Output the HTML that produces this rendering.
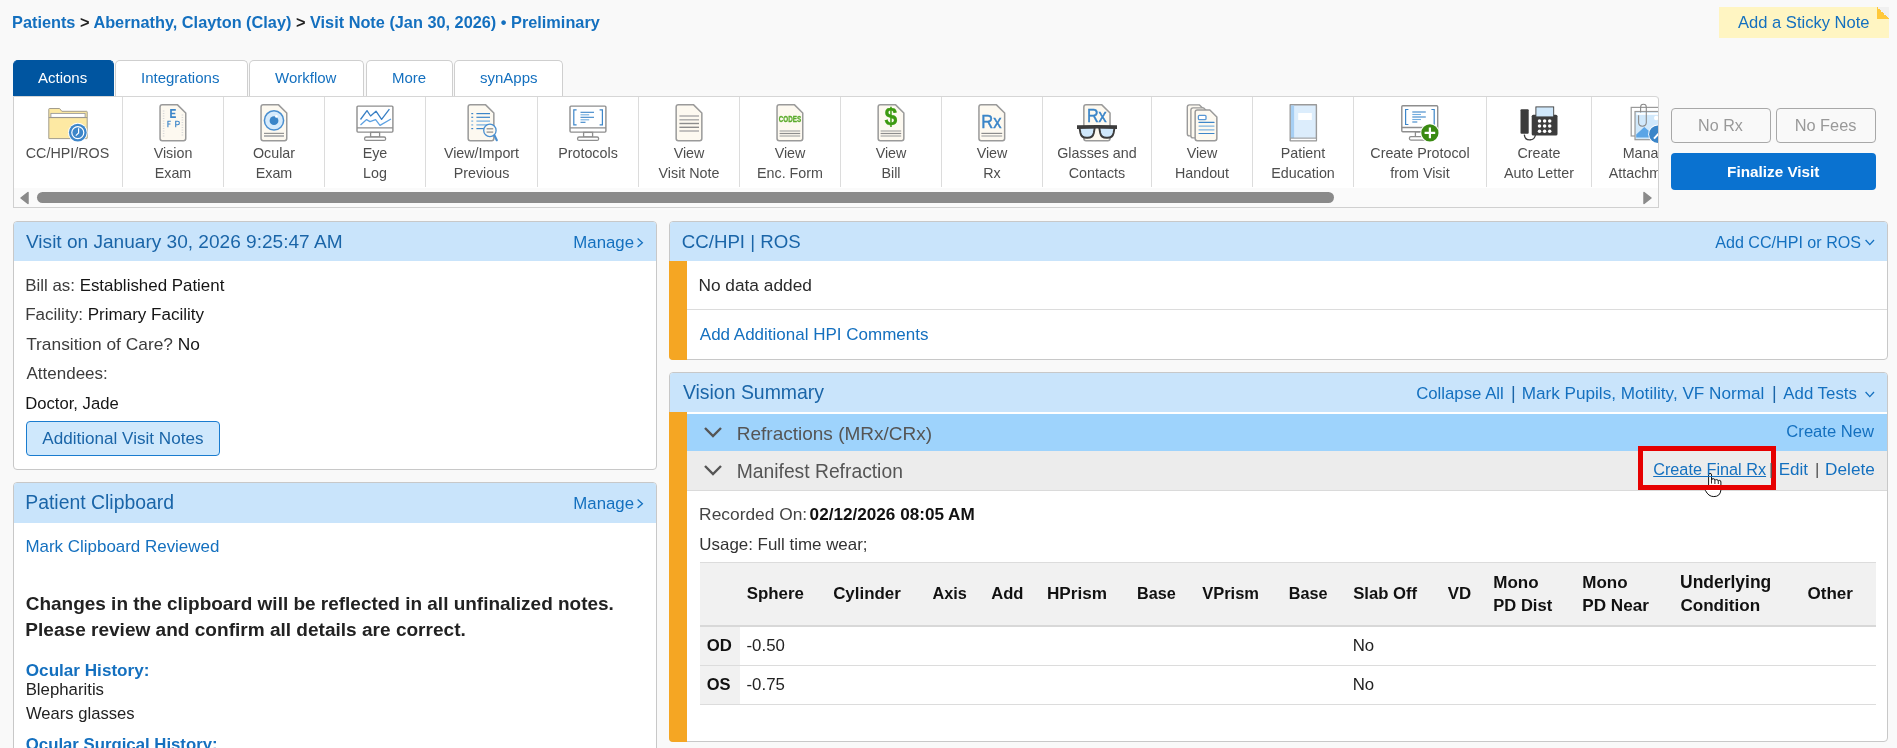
<!DOCTYPE html>
<html><head><meta charset="utf-8"><style>
html,body{margin:0;padding:0}
body{width:1897px;height:748px;overflow:hidden;position:relative;background:#f9f9f9;font-family:"Liberation Sans",sans-serif}
.t{position:absolute;white-space:nowrap;line-height:1}
.lk{color:#1470bf}
.tl{position:absolute;width:160px;text-align:center;font-size:14.3px;line-height:1;color:#4e4e4e;white-space:nowrap}
.a{position:absolute;box-sizing:border-box}
.sticky{left:1719px;top:7px;width:170px;height:31px;background:#fff5c2}
.fold{left:1877px;top:7px;width:12px;height:12px;background:linear-gradient(to bottom left,#f0f0f0 50%,#ffc83a 50%)}
.tab{top:60px;height:36px;background:#fff;border:1px solid #cfcfcf;border-bottom:none;border-radius:5px 5px 0 0}
.tab.act{background:#0055a0;border-color:#0055a0}
.tb{left:13px;top:96px;width:1646px;height:112px;background:#fff;border:1px solid #d0d0d0;border-top-color:#d6d6d6;border-radius:0 4px 0 0}
.sep{top:97px;width:1px;height:90px;background:#dcdcdc}
.sbar{left:14px;top:188px;width:1644px;height:19px;background:#fafafa}
.thumb{left:37px;top:192px;width:1297px;height:11px;background:#8a8a8a;border-radius:6px}
.btn{top:108px;height:35px;border:1px solid #a8a8a8;border-radius:4px;background:#f9f9f9}
.fin{left:1671px;top:153px;width:205px;height:37px;background:#0a72d0;border-radius:4px}
.panel{background:#fff;border:1px solid #c8c8c8;border-radius:4px;overflow:hidden}
.ph{position:absolute;left:0;top:0;right:0;height:39px;background:#c9e4fb}
.orange{background:#f5a623}

</style></head><body>
<!-- sticky note -->
<div class="a sticky"></div>
<div class="a fold"></div>
<!-- tabs -->
<div class="a tab act" style="left:13px;width:101px"></div>
<div class="a tab" style="left:115px;width:133px"></div>
<div class="a tab" style="left:249px;width:115px"></div>
<div class="a tab" style="left:366px;width:87px"></div>
<div class="a tab" style="left:454px;width:109px"></div>
<!-- toolbar -->
<div class="a tb"></div>
<div class="a sep" style="left:122px"></div>
<div class="a sep" style="left:223px"></div>
<div class="a sep" style="left:324px"></div>
<div class="a sep" style="left:425px"></div>
<div class="a sep" style="left:537px"></div>
<div class="a sep" style="left:638px"></div>
<div class="a sep" style="left:739px"></div>
<div class="a sep" style="left:840px"></div>
<div class="a sep" style="left:941px"></div>
<div class="a sep" style="left:1042px"></div>
<div class="a sep" style="left:1151px"></div>
<div class="a sep" style="left:1252px"></div>
<div class="a sep" style="left:1353px"></div>
<div class="a sep" style="left:1486px"></div>
<div class="a sep" style="left:1591px"></div>
<div class="a sbar"></div>
<div class="a thumb"></div>
<svg class="a" style="left:19px;top:191px" width="11" height="14"><path d="M2 7 L9 1.5 L9 12.5 Z" fill="#8a8a8a" stroke="#8a8a8a" stroke-width="1.5" stroke-linejoin="round"/></svg>
<svg class="a" style="left:1642px;top:191px" width="11" height="14"><path d="M9 7 L2 1.5 L2 12.5 Z" fill="#8a8a8a" stroke="#8a8a8a" stroke-width="1.5" stroke-linejoin="round"/></svg>
<!-- right buttons -->
<div class="a btn" style="left:1671px;width:100px"></div>
<div class="a btn" style="left:1776px;width:100px"></div>
<div class="a fin"></div>

<!-- visit panel -->
<div class="a panel" style="left:13px;top:221px;width:644px;height:249px"><div class="ph"></div></div>
<svg class="a" style="left:635px;top:236px" width="10" height="14"><path d="M2.6 2.6 L7.4 6.8 L2.6 11" fill="none" stroke="#1470bf" stroke-width="1.3"/></svg>
<div class="a" style="left:26px;top:421px;width:194px;height:35px;background:#cfe8fc;border:1px solid #1a7ccf;border-radius:4px"></div>

<!-- clipboard panel -->
<div class="a panel" style="left:13px;top:482px;width:644px;height:300px"><div class="ph" style="height:40px"></div></div>
<svg class="a" style="left:635px;top:497px" width="10" height="14"><path d="M2.6 2.6 L7.4 6.8 L2.6 11" fill="none" stroke="#1470bf" stroke-width="1.3"/></svg>

<!-- CC/HPI panel -->
<div class="a panel" style="left:669px;top:221px;width:1219px;height:139px"><div class="ph"></div>
  <div class="a" style="left:17px;top:87px;right:0;height:1px;background:#dcdcdc"></div>
</div>
<svg class="a" style="left:1864px;top:237px" width="12" height="10"><path d="M1.6 3 L5.8 7.6 L10 3" fill="none" stroke="#1470bf" stroke-width="1.3"/></svg>

<!-- Vision summary panel -->
<div class="a panel" style="left:669px;top:372px;width:1219px;height:370px"><div class="ph"></div>
  <div class="a" style="left:17px;top:39px;right:0;height:2px;background:#fff"></div>
  <div class="a" style="left:17px;top:41px;right:0;height:37px;background:#9ed3fc"></div>
  <div class="a" style="left:17px;top:78px;right:0;height:40px;background:#ececec;border-bottom:1px solid #dadada"></div>
  <!-- table -->
  <div class="a" style="left:30px;top:189px;width:1176px;height:65px;background:#f1f1f1;border-top:1px solid #dcdcdc;border-bottom:2px solid #d8d8d8"></div>
  <div class="a" style="left:30px;top:254px;width:40px;height:78px;background:#f1f1f1"></div>
  <div class="a" style="left:30px;top:292px;width:1176px;height:1px;background:#dcdcdc"></div>
  <div class="a" style="left:30px;top:331px;width:1176px;height:1px;background:#dcdcdc"></div>
</div>
<svg class="a" style="left:1864px;top:389px" width="12" height="10"><path d="M1.6 3 L5.8 7.6 L10 3" fill="none" stroke="#1470bf" stroke-width="1.3"/></svg>
<svg class="a" style="left:703px;top:426px" width="20" height="13"><path d="M2 2 L10 10 L18 2" fill="none" stroke="#555" stroke-width="2.4"/></svg>
<svg class="a" style="left:703px;top:464px" width="20" height="13"><path d="M2 2 L10 10 L18 2" fill="none" stroke="#555" stroke-width="2.4"/></svg>
<div class="a orange" style="left:669px;top:261px;width:18px;height:99px;border-radius:0 0 0 4px"></div>
<div class="a orange" style="left:669px;top:412px;width:18px;height:330px;border-radius:0 0 0 4px"></div>
<!-- cursor -->
<svg class="a" style="left:0;top:0" width="1897" height="748" viewBox="0 0 1897 748"><path d="M1708.6 486.5 L1708.6 475 Q1708.6 473.3 1710.05 473.3 Q1711.5 473.3 1711.5 475 L1711.5 480.2 Q1711.6 478.7 1713.2 478.7 Q1714.9 478.7 1714.9 480.4 Q1715.1 479.6 1716.6 479.6 Q1718.3 479.6 1718.3 481.2 Q1718.5 480.4 1719.6 480.4 Q1720.9 480.4 1720.9 482 L1720.9 490 Q1720.3 496.6 1713.8 496.6 Q1708.4 496.6 1705.4 490.4 Z" fill="#fff" stroke="#111" stroke-width="1" stroke-linejoin="round"/><path d="M1711.5 480.2 L1711.5 483.6 M1714.9 480.4 L1714.9 484 M1718.3 481.2 L1718.3 484" stroke="#111" stroke-width="0.9"/></svg>
<!-- red highlight box -->
<div class="a" style="left:1638px;top:446px;width:138px;height:44px;border:5px solid #e60000"></div>

<div class="a" style="left:0;top:0;width:1658px;height:188px;overflow:hidden;will-change:transform"><svg class="a" style="left:0;top:0" width="1658" height="188" viewBox="0 0 1658 188">
<path d="M48.8 138.6 L48.8 109.2 Q48.8 108.5 49.5 108.5 L59.6 108.5 L61.8 111.3 L86.6 111.3 Q87.2 111.3 87.2 112 L87.2 138 Q87.2 138.6 86.6 138.6 Z" fill="#fde9a3" stroke="#a39d8c" stroke-width="1"/>
<rect x="50.9" y="113.4" width="34.2" height="4" fill="#fff" stroke="#9a9a9a" stroke-width="0.9"/>
<line x1="48.8" y1="117.6" x2="87.2" y2="117.6" stroke="#9a9690" stroke-width="1"/>
<circle cx="77.8" cy="132.6" r="9.8" fill="#fff"/>
<circle cx="77.8" cy="132.6" r="8.9" fill="#3d86c9"/>
<circle cx="77.8" cy="132.6" r="6" fill="none" stroke="#fff" stroke-width="1.2"/>
<path d="M78.6 128.2 L78.6 133 L75.8 135.6" fill="none" stroke="#fff" stroke-width="1.2"/>
<path d="M162.25 104.85 L177.55 104.85 L185.75 113.05 L185.75 138.55 Q185.75 140.75 183.55 140.75 L162.25 140.75 Q160.05 140.75 160.05 138.55 L160.05 107.05 Q160.05 104.85 162.25 104.85 Z" fill="#fdf9f0" stroke="#9a9a9a" stroke-width="1.5" stroke-linejoin="round"/><rect x="162.8" y="110.5" width="1.6" height="1" fill="#d8d8d8"/><rect x="162.8" y="113.0" width="1.6" height="1" fill="#d8d8d8"/><rect x="162.8" y="115.5" width="1.6" height="1" fill="#d8d8d8"/><rect x="162.8" y="118.0" width="1.6" height="1" fill="#d8d8d8"/><rect x="162.8" y="120.5" width="1.6" height="1" fill="#d8d8d8"/><rect x="162.8" y="123.0" width="1.6" height="1" fill="#d8d8d8"/><rect x="162.8" y="125.5" width="1.6" height="1" fill="#d8d8d8"/><rect x="162.8" y="128.0" width="1.6" height="1" fill="#d8d8d8"/><rect x="162.8" y="130.5" width="1.6" height="1" fill="#d8d8d8"/><rect x="162.8" y="133.0" width="1.6" height="1" fill="#d8d8d8"/><rect x="162.8" y="135.5" width="1.6" height="1" fill="#d8d8d8"/><rect x="181.6" y="114.5" width="1.6" height="1" fill="#d8d8d8"/><rect x="181.6" y="117.0" width="1.6" height="1" fill="#d8d8d8"/><rect x="181.6" y="119.5" width="1.6" height="1" fill="#d8d8d8"/><rect x="181.6" y="122.0" width="1.6" height="1" fill="#d8d8d8"/><rect x="181.6" y="124.5" width="1.6" height="1" fill="#d8d8d8"/><rect x="181.6" y="127.0" width="1.6" height="1" fill="#d8d8d8"/><rect x="181.6" y="129.5" width="1.6" height="1" fill="#d8d8d8"/><rect x="181.6" y="132.0" width="1.6" height="1" fill="#d8d8d8"/><rect x="181.6" y="134.5" width="1.6" height="1" fill="#d8d8d8"/><path d="M175.8 109.8 L171 109.8 L171 117.2 L175.9 117.2 M171 113.5 L175.3 113.5" fill="none" stroke="#3d86c9" stroke-width="1.7"/><path d="M170.8 121.3 L167.9 121.3 L167.9 127.2 M167.9 124 L170.4 124" fill="none" stroke="#3d86c9" stroke-width="1.1"/><path d="M175.7 127.2 L175.7 121.3 L177.6 121.3 Q179.4 121.3 179.4 123 Q179.4 124.7 177.6 124.7 L175.7 124.7" fill="none" stroke="#3d86c9" stroke-width="1.1"/><path d="M263.25 104.85 L278.55 104.85 L286.75 113.05 L286.75 138.55 Q286.75 140.75 284.55 140.75 L263.25 140.75 Q261.05 140.75 261.05 138.55 L261.05 107.05 Q261.05 104.85 263.25 104.85 Z" fill="#fdf9f0" stroke="#9a9a9a" stroke-width="1.5" stroke-linejoin="round"/><circle cx="274" cy="120.4" r="9.6" fill="#d6ebfc" stroke="#4a8fd0" stroke-width="1.5"/><circle cx="274" cy="120.7" r="4.4" fill="#3a85c8"/><circle cx="276.4" cy="116.4" r="1.3" fill="#fff"/><rect x="264" y="132.8" width="20" height="1.1" fill="#8a8a8a"/><rect x="264" y="135" width="20" height="2" fill="#b4b4b4"/><rect x="357.0" y="106.10000000000001" width="35.9" height="26" rx="1" fill="#fff" stroke="#8e8e8e" stroke-width="1.4"/><line x1="357.0" y1="127.80000000000001" x2="392.90000000000003" y2="127.80000000000001" stroke="#8e8e8e" stroke-width="1.3"/><rect x="370.6" y="132.4" width="9" height="4.6" fill="#fff" stroke="#8e8e8e" stroke-width="1.3"/><rect x="364.6" y="137.0" width="21" height="3.4" rx="1.5" fill="#fff" stroke="#8e8e8e" stroke-width="1.3"/><polyline points="360.5,119.5 367,110.6 370.6,116 376,111.2 381.6,119.4 389.4,109.2" fill="none" stroke="#3a80c5" stroke-width="1.3" stroke-linejoin="round"/><polyline points="360.5,125 366.6,119.6 370,121.6 375.6,119.6 380,125.4 391,119" fill="none" stroke="#5ea2e2" stroke-width="1.3" stroke-linejoin="round"/><path d="M470.35 104.85 L485.65 104.85 L493.85 113.05 L493.85 138.55 Q493.85 140.75 491.65 140.75 L470.35 140.75 Q468.15 140.75 468.15 138.55 L468.15 107.05 Q468.15 104.85 470.35 104.85 Z" fill="#fdf9f0" stroke="#9a9a9a" stroke-width="1.5" stroke-linejoin="round"/><rect x="471.3" y="113.0" width="1.9" height="1.2" fill="#3d86c9"/><rect x="476.4" y="113.0" width="13.6" height="1.2" fill="#3d86c9"/><rect x="471.3" y="116.7" width="1.9" height="1.2" fill="#3d86c9"/><rect x="476.4" y="116.7" width="13.6" height="1.2" fill="#3d86c9"/><rect x="471.3" y="120.5" width="1.9" height="1.2" fill="#73aee0"/><rect x="476.4" y="120.5" width="13.6" height="1.2" fill="#73aee0"/><rect x="471.3" y="124.30000000000001" width="1.9" height="1.2" fill="#73aee0"/><rect x="476.4" y="124.30000000000001" width="13.6" height="1.2" fill="#73aee0"/><rect x="471.3" y="128.0" width="1.9" height="1.2" fill="#3d86c9"/><rect x="476.4" y="128.0" width="13.6" height="1.2" fill="#3d86c9"/><line x1="494" y1="134.6" x2="496.8" y2="140.2" stroke="#4a8fd0" stroke-width="2.2" stroke-linecap="round"/><circle cx="489.9" cy="130.4" r="6.2" fill="#fdf9f0" stroke="#4a8fd0" stroke-width="1.3"/><line x1="486.6" y1="128.8" x2="493.2" y2="128.8" stroke="#8a8a8a" stroke-width="1.2"/><line x1="486.6" y1="132.1" x2="493.2" y2="132.1" stroke="#8a8a8a" stroke-width="1.2"/><rect x="570.0" y="106.10000000000001" width="35.9" height="26" rx="1" fill="#fff" stroke="#8e8e8e" stroke-width="1.4"/><line x1="570.0" y1="127.80000000000001" x2="605.8999999999999" y2="127.80000000000001" stroke="#8e8e8e" stroke-width="1.3"/><rect x="583.5999999999999" y="132.4" width="9" height="4.6" fill="#fff" stroke="#8e8e8e" stroke-width="1.3"/><rect x="577.5999999999999" y="137.0" width="21" height="3.4" rx="1.5" fill="#fff" stroke="#8e8e8e" stroke-width="1.3"/><path d="M576.6 109.8 L573.8 109.8 L573.8 124.8 L576.6 124.8 M599.6 109.8 L602.4 109.8 L602.4 124.8 L599.6 124.8" fill="none" stroke="#3d86c9" stroke-width="1.2"/><rect x="580.5" y="111.75" width="13.5" height="1.1" fill="#3d86c9"/><rect x="580.5" y="114.25" width="8.700000000000045" height="1.1" fill="#73aee0"/><rect x="580.5" y="116.75" width="13.5" height="1.1" fill="#3d86c9"/><rect x="580.5" y="119.25" width="8.700000000000045" height="1.1" fill="#73aee0"/><rect x="580.5" y="121.75" width="5.0" height="1.1" fill="#3d86c9"/><path d="M678.35 104.85 L693.65 104.85 L701.85 113.05 L701.85 138.55 Q701.85 140.75 699.65 140.75 L678.35 140.75 Q676.15 140.75 676.15 138.55 L676.15 107.05 Q676.15 104.85 678.35 104.85 Z" fill="#fdf9f0" stroke="#9a9a9a" stroke-width="1.5" stroke-linejoin="round"/><rect x="679.4" y="115.3" width="19.6" height="1.4" fill="#a8a8a8"/><rect x="679.4" y="119.1" width="19.6" height="1.4" fill="#a8a8a8"/><rect x="679.4" y="122.8" width="19.6" height="1.4" fill="#8c8c8c"/><rect x="679.4" y="126.6" width="19.6" height="1.4" fill="#8c8c8c"/><rect x="679.4" y="130.3" width="19.6" height="1.4" fill="#a8a8a8"/><path d="M779.25 104.85 L794.55 104.85 L802.75 113.05 L802.75 138.55 Q802.75 140.75 800.55 140.75 L779.25 140.75 Q777.05 140.75 777.05 138.55 L777.05 107.05 Q777.05 104.85 779.25 104.85 Z" fill="#fdf9f0" stroke="#9a9a9a" stroke-width="1.5" stroke-linejoin="round"/><text x="778.8" y="121.7" font-family="Liberation Sans" font-weight="700" font-size="9" fill="#5aab2a" stroke="#5aab2a" stroke-width="0.35" textLength="22.4" lengthAdjust="spacingAndGlyphs">CODES</text><rect x="779.6" y="130.4" width="20.6" height="1.2" fill="#a8a8a8"/><rect x="779.6" y="132.9" width="20.6" height="1.2" fill="#8c8c8c"/><rect x="779.6" y="135.4" width="20.6" height="1.2" fill="#a8a8a8"/><path d="M880.35 104.85 L895.65 104.85 L903.85 113.05 L903.85 138.55 Q903.85 140.75 901.65 140.75 L880.35 140.75 Q878.15 140.75 878.15 138.55 L878.15 107.05 Q878.15 104.85 880.35 104.85 Z" fill="#fdf9f0" stroke="#9a9a9a" stroke-width="1.5" stroke-linejoin="round"/><text x="890.8" y="124.6" text-anchor="middle" font-family="Liberation Sans" font-weight="700" font-size="23" fill="#3d9a10" stroke="#3d9a10" stroke-width="0.3">$</text><rect x="880.6" y="130.4" width="20.6" height="1.2" fill="#a8a8a8"/><rect x="880.6" y="132.9" width="20.6" height="1.2" fill="#8c8c8c"/><rect x="880.6" y="135.4" width="20.6" height="1.2" fill="#a8a8a8"/><path d="M981.15 104.85 L996.45 104.85 L1004.65 113.05 L1004.65 138.55 Q1004.65 140.75 1002.45 140.75 L981.15 140.75 Q978.95 140.75 978.95 138.55 L978.95 107.05 Q978.95 104.85 981.15 104.85 Z" fill="#fdf9f0" stroke="#9a9a9a" stroke-width="1.5" stroke-linejoin="round"/><text x="981.3" y="128" font-family="Liberation Sans" font-weight="400" font-size="19" fill="#3a85c8" stroke="#3a85c8" stroke-width="0.45" textLength="20.2" lengthAdjust="spacingAndGlyphs">Rx</text><rect x="981.4" y="132.8" width="20.8" height="1.2" fill="#8c8c8c"/><rect x="981.4" y="135.4" width="20.8" height="1.2" fill="#a8a8a8"/><path d="M1086.05 104.85 L1101.85 104.85 L1110.05 113.05 L1110.05 138.55 Q1110.05 140.75 1107.85 140.75 L1086.05 140.75 Q1083.85 140.75 1083.85 138.55 L1083.85 107.05 Q1083.85 104.85 1086.05 104.85 Z" fill="#fdf9f0" stroke="#9a9a9a" stroke-width="1.5" stroke-linejoin="round"/><text x="1086.9" y="121.5" font-family="Liberation Sans" font-weight="400" font-size="19" fill="#3a85c8" stroke="#3a85c8" stroke-width="0.45" textLength="19.8" lengthAdjust="spacingAndGlyphs">Rx</text><path d="M1079.4 127.4 L1094.8 127.4 L1093.8 133 Q1092.8 137.8 1087.6 137.8 L1086.6 137.8 Q1081.4 137.8 1080.4 133 Z" fill="#d0e8fb" stroke="#3c3c3c" stroke-width="1.9" stroke-linejoin="round"/><path d="M1099.2 127.4 L1114.6 127.4 L1113.6 133 Q1112.6 137.8 1107.4 137.8 L1106.4 137.8 Q1101.2 137.8 1100.2 133 Z" fill="#d0e8fb" stroke="#3c3c3c" stroke-width="1.9" stroke-linejoin="round"/><path d="M1077 125.3 Q1097 124.5 1117 125.3 L1117 128.9 Q1097 128.1 1077 128.9 Z" fill="#3c3c3c"/><path d="M1189.50 104.90 L1199.50 104.90 L1202.50 107.90 L1202.50 133.70 Q1202.50 135.90 1200.30 135.90 L1189.50 135.90 Q1187.30 135.90 1187.30 133.70 L1187.30 107.10 Q1187.30 104.90 1189.50 104.90 Z" fill="#fdf9f0" stroke="#9a9a9a" stroke-width="1.4" stroke-linejoin="round"/><path d="M1193.10 107.90 L1203.70 107.90 L1206.70 110.90 L1206.70 135.70 Q1206.70 137.90 1204.50 137.90 L1193.10 137.90 Q1190.90 137.90 1190.90 135.70 L1190.90 110.10 Q1190.90 107.90 1193.10 107.90 Z" fill="#fdf9f0" stroke="#9a9a9a" stroke-width="1.4" stroke-linejoin="round"/><path d="M1197.35 110.05 L1209.85 110.05 L1216.85 117.05 L1216.85 138.55 Q1216.85 140.75 1214.65 140.75 L1197.35 140.75 Q1195.15 140.75 1195.15 138.55 L1195.15 112.25 Q1195.15 110.05 1197.35 110.05 Z" fill="#fdf9f0" stroke="#9a9a9a" stroke-width="1.5" stroke-linejoin="round"/><rect x="1198.4" y="115.3" width="7.6" height="4.4" rx="1" fill="#fff" stroke="#5a97d3" stroke-width="1.3"/><rect x="1198.4" y="121.80000000000001" width="16.2" height="1.2" rx="0.6" fill="#3d86c9"/><rect x="1198.4" y="125.5" width="16.2" height="1.2" rx="0.6" fill="#80b4e0"/><rect x="1198.4" y="129.20000000000002" width="16.2" height="1.2" rx="0.6" fill="#80b4e0"/><rect x="1198.4" y="132.9" width="16.2" height="1.2" rx="0.6" fill="#3d86c9"/>
<path d="M1290.2 104.8 L1316.4 104.8 L1316.4 140.8 L1290.2 140.8 Z" fill="#dcedfc" stroke="#9a9a9a" stroke-width="1.4" stroke-linejoin="round"/>
<rect x="1290.9" y="105.5" width="3.2" height="32.6" fill="#a6cff4"/>
<line x1="1290.2" y1="138.2" x2="1316.4" y2="138.2" stroke="#9a9a9a" stroke-width="1.2"/>
<rect x="1291" y="138.8" width="24.8" height="1.4" fill="#fff"/>
<rect x="1298.2" y="113" width="13.6" height="7" fill="#fff"/>
<rect x="1401.8" y="105.8" width="35.9" height="26" rx="1" fill="#fff" stroke="#8e8e8e" stroke-width="1.4"/><line x1="1401.8" y1="127.5" x2="1437.6999999999998" y2="127.5" stroke="#8e8e8e" stroke-width="1.3"/><rect x="1415.3999999999999" y="132.1" width="9" height="4.6" fill="#fff" stroke="#8e8e8e" stroke-width="1.3"/><rect x="1409.3999999999999" y="136.7" width="21" height="3.4" rx="1.5" fill="#fff" stroke="#8e8e8e" stroke-width="1.3"/><path d="M1408.4 109.5 L1405.6 109.5 L1405.6 124.5 L1408.4 124.5 M1431.4 109.5 L1434.2 109.5 L1434.2 124.5 L1431.4 124.5" fill="none" stroke="#3d86c9" stroke-width="1.2"/><rect x="1412.3" y="111.45" width="13.5" height="1.1" fill="#3d86c9"/><rect x="1412.3" y="113.95" width="8.700000000000045" height="1.1" fill="#73aee0"/><rect x="1412.3" y="116.45" width="13.5" height="1.1" fill="#3d86c9"/><rect x="1412.3" y="118.95" width="8.700000000000045" height="1.1" fill="#73aee0"/><rect x="1412.3" y="121.45" width="5.0" height="1.1" fill="#3d86c9"/><circle cx="1429.9" cy="132.9" r="9.6" fill="#fff"/><circle cx="1429.9" cy="132.9" r="8.6" fill="#3a8a12"/><path d="M1429.9 127.6 L1429.9 138.2 M1424.6 132.9 L1435.2 132.9" stroke="#fff" stroke-width="2.2"/>
<rect x="1520.5" y="109.3" width="8.2" height="24.4" rx="1" fill="#3c3c3c"/>
<path d="M1524.3 134.6 Q1524.8 139.9 1529.6 139.9 Q1534.6 139.9 1535.4 135" fill="none" stroke="#3c3c3c" stroke-width="1.3"/>
<rect x="1531.7" y="114.7" width="25.8" height="20.8" rx="1.6" fill="#3c3c3c"/>
<rect x="1535.9" y="106.9" width="17.8" height="10" fill="#d0e8fb" stroke="#3c3c3c" stroke-width="0.9"/>
<circle cx="1539.5" cy="121.1" r="1.75" fill="#fff"/><circle cx="1539.5" cy="126" r="1.75" fill="#fff"/><circle cx="1539.5" cy="131.2" r="1.75" fill="#fff"/><circle cx="1544.6" cy="121.1" r="1.75" fill="#fff"/><circle cx="1544.6" cy="126" r="1.75" fill="#fff"/><circle cx="1544.6" cy="131.2" r="1.75" fill="#fff"/><circle cx="1549.7" cy="121.1" r="1.75" fill="#fff"/><circle cx="1549.7" cy="126" r="1.75" fill="#fff"/><circle cx="1549.7" cy="131.2" r="1.75" fill="#fff"/>
<rect x="1631.2" y="107.4" width="30" height="28.6" fill="#fff" stroke="#9a9a9a" stroke-width="1.2"/>
<rect x="1635" y="111.5" width="30" height="28.2" fill="#d0e8fb" stroke="#9a9a9a" stroke-width="1.2"/>
<rect x="1636.4" y="112.8" width="27" height="2" fill="#fff"/>
<path d="M1636.2 137.6 L1636.2 134.5 L1644.3 127 L1649.5 131.5 L1652 137.6 Z" fill="#5ba5e6"/>
<circle cx="1656.2" cy="118" r="2.2" fill="#fff"/>
<path d="M1640.6 112.4 L1640.6 107.2 Q1640.6 104.3 1643.5 104.3 Q1646.3 104.3 1646.3 107.2 L1646.3 122.6 Q1646.3 126.2 1642.4 126.2 Q1638.6 126.2 1638.6 122.6 L1638.6 115.2" fill="none" stroke="#8a8a8a" stroke-width="1.1"/>
<circle cx="1657.8" cy="134.2" r="9.6" fill="#fff"/>
<circle cx="1657.8" cy="134.2" r="8.7" fill="#3a85c8"/>
<path d="M1654 138.6 L1658.6 133.6" stroke="#fff" stroke-width="2"/>
</svg></div>
<div class="a" style="left:0;top:0;width:1897px;height:748px;will-change:transform">
<div class="a" style="left:0;top:0;width:1658px;height:188px;overflow:hidden"><div class="tl" style="left:-12.5px;top:146.00px">CC/HPI/ROS</div><div class="tl" style="left:93.0px;top:146.00px">Vision</div><div class="tl" style="left:93.0px;top:166.00px">Exam</div><div class="tl" style="left:194.0px;top:146.00px">Ocular</div><div class="tl" style="left:194.0px;top:166.00px">Exam</div><div class="tl" style="left:295.0px;top:146.00px">Eye</div><div class="tl" style="left:295.0px;top:166.00px">Log</div><div class="tl" style="left:401.5px;top:146.00px">View/Import</div><div class="tl" style="left:401.5px;top:166.00px">Previous</div><div class="tl" style="left:508.0px;top:146.00px">Protocols</div><div class="tl" style="left:609.0px;top:146.00px">View</div><div class="tl" style="left:609.0px;top:166.00px">Visit Note</div><div class="tl" style="left:710.0px;top:146.00px">View</div><div class="tl" style="left:710.0px;top:166.00px">Enc. Form</div><div class="tl" style="left:811.0px;top:146.00px">View</div><div class="tl" style="left:811.0px;top:166.00px">Bill</div><div class="tl" style="left:912.0px;top:146.00px">View</div><div class="tl" style="left:912.0px;top:166.00px">Rx</div><div class="tl" style="left:1017.0px;top:146.00px">Glasses and</div><div class="tl" style="left:1017.0px;top:166.00px">Contacts</div><div class="tl" style="left:1122.0px;top:146.00px">View</div><div class="tl" style="left:1122.0px;top:166.00px">Handout</div><div class="tl" style="left:1223.0px;top:146.00px">Patient</div><div class="tl" style="left:1223.0px;top:166.00px">Education</div><div class="tl" style="left:1340.0px;top:146.00px">Create Protocol</div><div class="tl" style="left:1340.0px;top:166.00px">from Visit</div><div class="tl" style="left:1459.0px;top:146.00px">Create</div><div class="tl" style="left:1459.0px;top:166.00px">Auto Letter</div><div class="tl" style="left:1568.5px;top:146.00px">Manage</div><div class="tl" style="left:1568.5px;top:166.00px">Attachments</div></div>
<div class="t" style="left:12.02px;top:14.00px;font-size:16.31px;font-weight:700;color:#222;"><span class="lk">Patients</span> &gt; <span class="lk">Abernathy, Clayton (Clay)</span> &gt; <span class="lk">Visit Note (Jan 30, 2026) • Preliminary</span></div>
<div class="t" style="left:1738.00px;top:15.00px;font-size:16.56px;font-weight:400;color:#1470bf;">Add a Sticky Note</div>
<div class="t" style="left:38.00px;top:70.00px;font-size:15px;font-weight:400;color:#fff;">Actions</div>
<div class="t" style="left:141.00px;top:70.00px;font-size:15px;font-weight:400;color:#1470bf;">Integrations</div>
<div class="t" style="left:275.00px;top:70.00px;font-size:15px;font-weight:400;color:#1470bf;">Workflow</div>
<div class="t" style="left:392.00px;top:70.00px;font-size:15px;font-weight:400;color:#1470bf;">More</div>
<div class="t" style="left:480.00px;top:70.00px;font-size:15px;font-weight:400;color:#1470bf;">synApps</div>
<div class="t" style="left:1698.11px;top:117.00px;font-size:16.1px;font-weight:400;color:#999;">No Rx</div>
<div class="t" style="left:1794.69px;top:117.00px;font-size:16.35px;font-weight:400;color:#999;">No Fees</div>
<div class="t" style="left:1727.08px;top:164.00px;font-size:15.31px;font-weight:700;color:#fff;">Finalize Visit</div>
<div class="t" style="left:26.00px;top:232.00px;font-size:19.07px;font-weight:400;color:#1a65a8;">Visit on January 30, 2026 9:25:47 AM</div>
<div class="t" style="left:573.36px;top:235.00px;font-size:16.79px;font-weight:400;color:#1470bf;">Manage</div>
<div class="t" style="left:25.15px;top:278.00px;font-size:16.92px;font-weight:400;color:#3c3c3c;">Bill as: <span style="color:#151515">Established Patient</span></div>
<div class="t" style="left:25.14px;top:306.00px;font-size:17.06px;font-weight:400;color:#3c3c3c;">Facility: <span style="color:#151515">Primary Facility</span></div>
<div class="t" style="left:26.15px;top:336.00px;font-size:17.35px;font-weight:400;color:#3c3c3c;">Transition of Care? <span style="color:#151515">No</span></div>
<div class="t" style="left:26.50px;top:365.00px;font-size:17.0px;font-weight:400;color:#3c3c3c;">Attendees:</div>
<div class="t" style="left:25.17px;top:396.00px;font-size:16.67px;font-weight:400;color:#151515;">Doctor, Jade</div>
<div class="t" style="left:42.30px;top:430.00px;font-size:17.1px;font-weight:400;color:#1a65a8;">Additional Visit Notes</div>
<div class="t" style="left:25.25px;top:493.00px;font-size:19.4px;font-weight:400;color:#1a65a8;">Patient Clipboard</div>
<div class="t" style="left:573.36px;top:496.00px;font-size:16.79px;font-weight:400;color:#1470bf;">Manage</div>
<div class="t" style="left:25.44px;top:539.00px;font-size:16.96px;font-weight:400;color:#1470bf;">Mark Clipboard Reviewed</div>
<div class="t" style="left:25.74px;top:594.00px;font-size:18.98px;font-weight:700;color:#222;">Changes in the clipboard will be reflected in all unfinalized notes.</div>
<div class="t" style="left:25.36px;top:620.00px;font-size:19.06px;font-weight:700;color:#222;">Please review and confirm all details are correct.</div>
<div class="t" style="left:25.82px;top:662.00px;font-size:17.11px;font-weight:700;color:#1470bf;">Ocular History:</div>
<div class="t" style="left:25.66px;top:682.00px;font-size:16.8px;font-weight:400;color:#222;">Blepharitis</div>
<div class="t" style="left:26.00px;top:706.00px;font-size:16.6px;font-weight:400;color:#222;">Wears glasses</div>
<div class="t" style="left:25.83px;top:737.00px;font-size:16.76px;font-weight:700;color:#1470bf;">Ocular Surgical History:</div>
<div class="t" style="left:681.77px;top:233.00px;font-size:18.68px;font-weight:400;color:#1a65a8;">CC/HPI | ROS</div>
<div class="t" style="left:1715.24px;top:234.00px;font-size:16.1px;font-weight:400;color:#1470bf;">Add CC/HPI or ROS</div>
<div class="t" style="left:698.42px;top:277.00px;font-size:17.31px;font-weight:400;color:#2a2a2a;">No data added</div>
<div class="t" style="left:699.80px;top:326.00px;font-size:17.0px;font-weight:400;color:#1470bf;">Add Additional HPI Comments</div>
<div class="t" style="left:682.90px;top:383.00px;font-size:19.44px;font-weight:400;color:#1a65a8;">Vision Summary</div>
<div class="t" style="left:1416.16px;top:386.00px;font-size:16.77px;font-weight:400;color:#1470bf;">Collapse All</div>
<div class="t" style="left:1511.00px;top:384.00px;font-size:18px;font-weight:400;color:#1a65a8;">|</div>
<div class="t" style="left:1521.63px;top:385.00px;font-size:17.16px;font-weight:400;color:#1470bf;">Mark Pupils, Motility, VF Normal</div>
<div class="t" style="left:1772.00px;top:384.00px;font-size:18px;font-weight:400;color:#1a65a8;">|</div>
<div class="t" style="left:1783.30px;top:386.00px;font-size:16.84px;font-weight:400;color:#1470bf;">Add Tests</div>
<div class="t" style="left:736.78px;top:424.00px;font-size:19.0px;font-weight:400;color:#555;">Refractions (MRx/CRx)</div>
<div class="t" style="left:1786.37px;top:424.00px;font-size:16.63px;font-weight:400;color:#1470bf;">Create New</div>
<div class="t" style="left:736.76px;top:462.00px;font-size:19.3px;font-weight:400;color:#555;">Manifest Refraction</div>
<div class="t" style="left:1653.19px;top:461.00px;font-size:16.26px;font-weight:400;color:#1470bf;text-decoration:underline;">Create Final Rx</div>
<div class="t" style="left:1769.00px;top:461.00px;font-size:17px;font-weight:400;color:#555;">|</div>
<div class="t" style="left:1778.63px;top:461.00px;font-size:17.07px;font-weight:400;color:#1470bf;">Edit</div>
<div class="t" style="left:1815.00px;top:461.00px;font-size:17px;font-weight:400;color:#555;">|</div>
<div class="t" style="left:1825.12px;top:461.00px;font-size:17.22px;font-weight:400;color:#1470bf;">Delete</div>
<div class="t" style="left:699.11px;top:506.00px;font-size:17.38px;font-weight:400;color:#444;">Recorded On:</div>
<div class="t" style="left:809.61px;top:506.00px;font-size:17.15px;font-weight:700;color:#111;">02/12/2026 08:05 AM</div>
<div class="t" style="left:699.32px;top:537.00px;font-size:16.91px;font-weight:400;color:#333;">Usage: Full time wear;</div>
<div class="t" style="left:746.69px;top:586.00px;font-size:16.88px;font-weight:700;color:#111;">Sphere</div>
<div class="t" style="left:833.13px;top:586.00px;font-size:16.91px;font-weight:700;color:#111;">Cylinder</div>
<div class="t" style="left:932.52px;top:585.00px;font-size:16.27px;font-weight:700;color:#111;">Axis</div>
<div class="t" style="left:991.21px;top:586.00px;font-size:16.59px;font-weight:700;color:#111;">Add</div>
<div class="t" style="left:1046.97px;top:585.00px;font-size:17.16px;font-weight:700;color:#111;">HPrism</div>
<div class="t" style="left:1137.02px;top:585.00px;font-size:16.22px;font-weight:700;color:#111;">Base</div>
<div class="t" style="left:1202.13px;top:585.00px;font-size:16.51px;font-weight:700;color:#111;">VPrism</div>
<div class="t" style="left:1288.82px;top:585.00px;font-size:16.22px;font-weight:700;color:#111;">Base</div>
<div class="t" style="left:1353.20px;top:586.00px;font-size:16.69px;font-weight:700;color:#111;">Slab Off</div>
<div class="t" style="left:1447.73px;top:586.00px;font-size:16.87px;font-weight:700;color:#111;">VD</div>
<div class="t" style="left:1807.54px;top:585.00px;font-size:17.0px;font-weight:700;color:#111;">Other</div>
<div class="t" style="left:1493.28px;top:574.00px;font-size:17.0px;font-weight:700;color:#111;">Mono</div>
<div class="t" style="left:1493.31px;top:598.00px;font-size:16.56px;font-weight:700;color:#111;">PD Dist</div>
<div class="t" style="left:1582.28px;top:574.00px;font-size:17.0px;font-weight:700;color:#111;">Mono</div>
<div class="t" style="left:1582.27px;top:597.00px;font-size:17.15px;font-weight:700;color:#111;">PD Near</div>
<div class="t" style="left:1680.05px;top:574.00px;font-size:17.47px;font-weight:700;color:#111;">Underlying</div>
<div class="t" style="left:1680.42px;top:597.00px;font-size:17.09px;font-weight:700;color:#111;">Condition</div>
<div class="t" style="left:706.73px;top:638.00px;font-size:16.76px;font-weight:700;color:#111;">OD</div>
<div class="t" style="left:706.74px;top:676.00px;font-size:16.5px;font-weight:700;color:#111;">OS</div>
<div class="t" style="left:746.53px;top:638.00px;font-size:16.82px;font-weight:400;color:#222;">-0.50</div>
<div class="t" style="left:746.53px;top:677.00px;font-size:16.82px;font-weight:400;color:#222;">-0.75</div>
<div class="t" style="left:1352.66px;top:638.00px;font-size:16.8px;font-weight:400;color:#222;">No</div>
<div class="t" style="left:1352.66px;top:677.00px;font-size:16.8px;font-weight:400;color:#222;">No</div>
</div>
</body></html>
